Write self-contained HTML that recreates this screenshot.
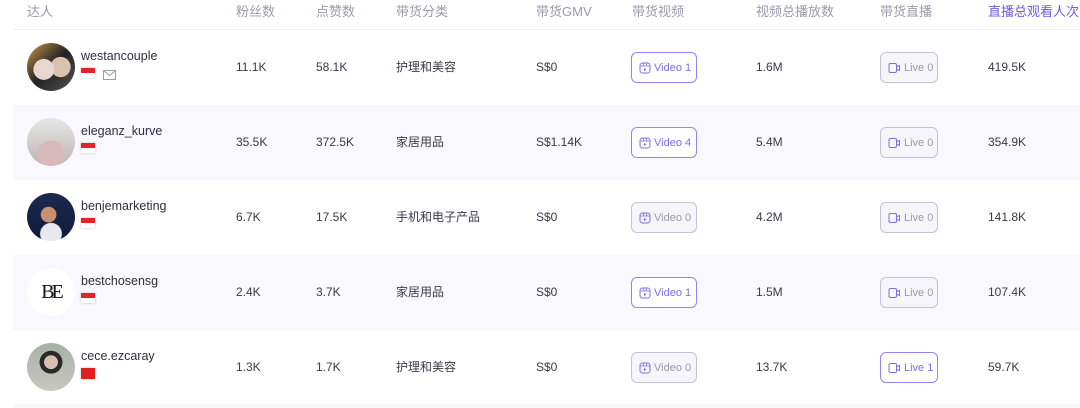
<!DOCTYPE html><html><head><meta charset="utf-8"><style>
*{margin:0;padding:0;box-sizing:border-box}
body{width:1080px;height:408px;overflow:hidden;background:#fff;font-family:"Liberation Sans","Noto Sans CJK SC",sans-serif;position:relative;color:#333}
.h{position:absolute;top:4px;font-size:13px;line-height:16px;color:#9a9aae}
.hl{position:absolute;left:13px;right:0;top:29px;height:1px;background:#eeeef4}
.row{position:absolute;left:13px;right:0;height:75px}
.alt{background:#f8f8fe}
.c{position:absolute;top:29px;font-size:12px;line-height:16px;color:#3a3a4a}
.av{position:absolute;left:14px;top:13px;width:48px;height:48px;border-radius:50%;overflow:hidden}
.nm{position:absolute;left:68px;top:18px;font-size:12.5px;line-height:16px;color:#2e2e40}
.fl{position:absolute;left:68px;top:38px;width:14px;height:10px;background:linear-gradient(#e8202a 50%,#fff 50%);box-shadow:0 0 2px #bbb}
.btn{position:absolute;top:22px;height:31px;border:1px solid #8f86f5;border-radius:6px;font-size:11px;line-height:14px;color:#7a6fe8;display:flex;align-items:center;padding-left:7px;gap:3px;background:#fff;white-space:nowrap}
.dis{border-color:#c4c2d6;background:#f6f5fa;color:#9a99aa}
.v{left:618px;width:66px}.l{left:867px;width:58px}
</style></head><body>
<div class="h" style="left:27px">达人</div><div class="h" style="left:236px">粉丝数</div><div class="h" style="left:316px">点赞数</div><div class="h" style="left:396px">带货分类</div><div class="h" style="left:536px">带货GMV</div><div class="h" style="left:632px">带货视频</div><div class="h" style="left:756px">视频总播放数</div><div class="h" style="left:880px">带货直播</div><div class="h" style="left:988px;color:#6a5ce8">直播总观看人次</div>
<div class="hl"></div>

<div class="row" style="top:30px">
<div class="av" style="background:radial-gradient(circle at 35% 55%,#e8d6d0 0 25%,transparent 26%),radial-gradient(circle at 70% 50%,#d9c2b0 0 24%,transparent 25%),linear-gradient(135deg,#c99a4a,#222 50%,#555)"></div>
<div class="nm">westancouple</div><div class="fl"></div>
<svg style="position:absolute;left:90px;top:40px" width="13" height="10" viewBox="0 0 13 10"><rect x=".5" y=".5" width="12" height="9" fill="none" stroke="#9a9ab0"/><path d="M1 1l5.5 4.5L12 1" fill="none" stroke="#9a9ab0"/></svg>
<div class="c" style="left:223px">11.1K</div><div class="c" style="left:303px">58.1K</div><div class="c" style="left:383px">护理和美容</div><div class="c" style="left:523px">S$0</div>
<div class="btn v"><svg width="12" height="12" viewBox="0 0 12 12"><rect x="1" y="1" width="10" height="10" rx="2.5" fill="none" stroke="#7a6fe8"/><path d="M1 4h10M4 1l1 3M7 1l1 3" stroke="#7a6fe8" fill="none" stroke-width=".8"/><path d="M5 6v3l2.5-1.5z" fill="#7a6fe8"/></svg>Video 1</div>
<div class="c" style="left:743px">1.6M</div>
<div class="btn l dis"><svg width="13" height="12" viewBox="0 0 13 12"><rect x="1" y="1.5" width="7.5" height="9" rx="1.5" fill="none" stroke="#7a6fe8"/><path d="M9 4.5l2.5-1v5L9 7.5" fill="none" stroke="#7a6fe8"/></svg>Live 0</div>
<div class="c" style="left:975px">419.5K</div></div>

<div class="row alt" style="top:105px">
<div class="av" style="background:radial-gradient(circle at 50% 75%,#d8b8b8 0 30%,transparent 32%),linear-gradient(#e6e6e6,#bdb6b0)"></div>
<div class="nm">eleganz_kurve</div><div class="fl"></div>
<div class="c" style="left:223px">35.5K</div><div class="c" style="left:303px">372.5K</div><div class="c" style="left:383px">家居用品</div><div class="c" style="left:523px">S$1.14K</div>
<div class="btn v"><svg width="12" height="12" viewBox="0 0 12 12"><rect x="1" y="1" width="10" height="10" rx="2.5" fill="none" stroke="#7a6fe8"/><path d="M1 4h10M4 1l1 3M7 1l1 3" stroke="#7a6fe8" fill="none" stroke-width=".8"/><path d="M5 6v3l2.5-1.5z" fill="#7a6fe8"/></svg>Video 4</div>
<div class="c" style="left:743px">5.4M</div>
<div class="btn l dis"><svg width="13" height="12" viewBox="0 0 13 12"><rect x="1" y="1.5" width="7.5" height="9" rx="1.5" fill="none" stroke="#7a6fe8"/><path d="M9 4.5l2.5-1v5L9 7.5" fill="none" stroke="#7a6fe8"/></svg>Live 0</div>
<div class="c" style="left:975px">354.9K</div></div>

<div class="row" style="top:180px">
<div class="av" style="background:radial-gradient(circle at 45% 45%,#c99070 0 20%,transparent 22%),radial-gradient(circle at 50% 85%,#e8e8f0 0 22%,transparent 24%),linear-gradient(#1c2a50,#0e1a3a)"></div>
<div class="nm">benjemarketing</div><div class="fl"></div>
<div class="c" style="left:223px">6.7K</div><div class="c" style="left:303px">17.5K</div><div class="c" style="left:383px">手机和电子产品</div><div class="c" style="left:523px">S$0</div>
<div class="btn v dis"><svg width="12" height="12" viewBox="0 0 12 12"><rect x="1" y="1" width="10" height="10" rx="2.5" fill="none" stroke="#7a6fe8"/><path d="M1 4h10M4 1l1 3M7 1l1 3" stroke="#7a6fe8" fill="none" stroke-width=".8"/><path d="M5 6v3l2.5-1.5z" fill="#7a6fe8"/></svg>Video 0</div>
<div class="c" style="left:743px">4.2M</div>
<div class="btn l dis"><svg width="13" height="12" viewBox="0 0 13 12"><rect x="1" y="1.5" width="7.5" height="9" rx="1.5" fill="none" stroke="#7a6fe8"/><path d="M9 4.5l2.5-1v5L9 7.5" fill="none" stroke="#7a6fe8"/></svg>Live 0</div>
<div class="c" style="left:975px">141.8K</div></div>

<div class="row alt" style="top:255px">
<div class="av" style="background:#fff;display:flex;align-items:center;justify-content:center;font-family:'Liberation Serif',serif;font-size:20px;color:#111;letter-spacing:-3px">BE</div>
<div class="nm">bestchosensg</div><div class="fl"></div>
<div class="c" style="left:223px">2.4K</div><div class="c" style="left:303px">3.7K</div><div class="c" style="left:383px">家居用品</div><div class="c" style="left:523px">S$0</div>
<div class="btn v"><svg width="12" height="12" viewBox="0 0 12 12"><rect x="1" y="1" width="10" height="10" rx="2.5" fill="none" stroke="#7a6fe8"/><path d="M1 4h10M4 1l1 3M7 1l1 3" stroke="#7a6fe8" fill="none" stroke-width=".8"/><path d="M5 6v3l2.5-1.5z" fill="#7a6fe8"/></svg>Video 1</div>
<div class="c" style="left:743px">1.5M</div>
<div class="btn l dis"><svg width="13" height="12" viewBox="0 0 13 12"><rect x="1" y="1.5" width="7.5" height="9" rx="1.5" fill="none" stroke="#7a6fe8"/><path d="M9 4.5l2.5-1v5L9 7.5" fill="none" stroke="#7a6fe8"/></svg>Live 0</div>
<div class="c" style="left:975px">107.4K</div></div>

<div class="row" style="top:330px">
<div class="av" style="background:radial-gradient(circle at 50% 40%,#d8c0b0 0 18%,#2a2a2a 19% 30%,transparent 31%),linear-gradient(#a8b0a8,#c8c8c0)"></div>
<div class="nm">cece.ezcaray</div><div class="fl" style="background:#e02020;height:11px"></div>
<div class="c" style="left:223px">1.3K</div><div class="c" style="left:303px">1.7K</div><div class="c" style="left:383px">护理和美容</div><div class="c" style="left:523px">S$0</div>
<div class="btn v dis"><svg width="12" height="12" viewBox="0 0 12 12"><rect x="1" y="1" width="10" height="10" rx="2.5" fill="none" stroke="#7a6fe8"/><path d="M1 4h10M4 1l1 3M7 1l1 3" stroke="#7a6fe8" fill="none" stroke-width=".8"/><path d="M5 6v3l2.5-1.5z" fill="#7a6fe8"/></svg>Video 0</div>
<div class="c" style="left:743px">13.7K</div>
<div class="btn l"><svg width="13" height="12" viewBox="0 0 13 12"><rect x="1" y="1.5" width="7.5" height="9" rx="1.5" fill="none" stroke="#7a6fe8"/><path d="M9 4.5l2.5-1v5L9 7.5" fill="none" stroke="#7a6fe8"/></svg>Live 1</div>
<div class="c" style="left:975px">59.7K</div></div>
<div class="row alt" style="top:404px;height:4px"></div>
</body></html>
